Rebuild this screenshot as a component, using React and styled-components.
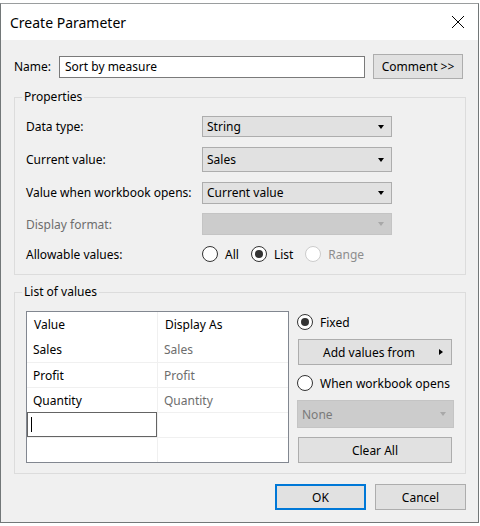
import React from 'react'
import styled, { createGlobalStyle } from 'styled-components'

const GlobalStyle = createGlobalStyle`
  html, body {
    margin: 0;
    padding: 0;
    background: #ffffff;
  }
  body {
    font-family: 'Segoe UI', 'Noto Sans', sans-serif;
    font-size: 12px;
    color: #000;
  }
`

const Window = styled.div`
  margin-top: 3px;
  width: 477px;
  border: 1px solid #727778;
  border-top-color: #9a9d9e;
  background: #f0f0f0;
  box-shadow: 0 2px 0 #8e9292;
`

const TitleBar = styled.div`
  height: 36px;
  background: #ffffff;
  display: flex;
  align-items: center;
  padding-left: 9px;
  padding-right: 13px;
`

const Title = styled.div`
  flex: 1;
  font-size: 14px;
`

const CloseButton = styled.div`
  width: 14px;
  height: 14px;
  display: flex;
`

const Body = styled.div`
  padding: 14px 12px 12px 13px;
`

const NameRow = styled.div`
  display: flex;
  align-items: center;
  height: 25px;
`

const NameLabel = styled.span`
  width: 45px;
`

const TextInput = styled.div`
  width: 299px;
  height: 20px;
  border: 1px solid #7a7a7a;
  background: #ffffff;
  display: flex;
  align-items: center;
  padding-left: 5px;
  margin-right: 8px;
`

const Button = styled.div`
  box-sizing: border-box;
  width: ${p => p.$w}px;
  height: ${p => p.$h || 26}px;
  background: #e1e1e1;
  border: ${p => (p.$primary ? '2px solid #0078d7' : '1px solid #adadad')};
  display: flex;
  align-items: center;
  justify-content: center;
`

const Group = styled.fieldset`
  margin: ${p => p.$top}px 0 0 0;
  padding: ${p => p.$pad};
  border: 1px solid #dcdcdc;
  min-width: 0;
`

const Legend = styled.legend`
  padding: 0 2px;
  margin-left: -4px;
  line-height: 16px;
`

const PropRow = styled.div`
  display: flex;
  align-items: center;
  height: ${p => p.$h}px;
`

const PropLabel = styled.span`
  width: 176px;
  color: ${p => (p.$disabled ? '#6d6d6d' : '#000')};
`

const SelectBox = styled.div`
  box-sizing: border-box;
  width: ${p => p.$w}px;
  height: ${p => p.$h}px;
  background: ${p => (p.$disabled ? '#cccccc' : '#e1e1e1')};
  border: 1px solid ${p => (p.$disabled ? '#c4c4c4' : '#adadad')};
  color: ${p => (p.$disabled ? '#7a7a7a' : '#000')};
  display: flex;
  align-items: center;
  padding: 0 7px 0 4px;

  span {
    flex: 1;
  }
`

const Caret = styled.i`
  width: 0;
  height: 0;
  border-left: 3.5px solid transparent;
  border-right: 3.5px solid transparent;
  border-top: 4px solid ${p => (p.$disabled ? '#a8a8a8' : '#000')};
`

const RadioGroup = styled.div`
  display: flex;
  align-items: center;
`

const RadioItem = styled.label`
  display: flex;
  align-items: center;
  margin-right: ${p => p.$gap || 0}px;
  color: ${p => (p.$disabled ? '#8d8d8d' : '#000')};
  height: ${p => p.$h || 16}px;
`

const Circle = styled.span`
  box-sizing: border-box;
  width: 16px;
  height: 16px;
  border-radius: 50%;
  border: 1px solid ${p => (p.$disabled ? '#cccccc' : '#333333')};
  background: #ffffff;
  display: flex;
  align-items: center;
  justify-content: center;
  margin-right: 7px;

  &::after {
    content: '';
    display: ${p => (p.$checked ? 'block' : 'none')};
    width: 8px;
    height: 8px;
    border-radius: 50%;
    background: #333333;
  }
`

const ListArea = styled.div`
  display: flex;
`

const Table = styled.div`
  box-sizing: border-box;
  width: 263px;
  height: 152px;
  border: 1px solid #828790;
  background: #ffffff;
  display: grid;
  grid-template-columns: 130px 1fr;
  grid-auto-rows: 25px;
  align-content: start;
`

const Cell = styled.div`
  display: flex;
  align-items: center;
  padding-left: ${p => (p.$head ? 7 : 6)}px;
  border-top: ${p => (p.$line ? '1px solid #f0f0f0' : 'none')};
  border-left: ${p => (p.$second ? '1px solid #f0f0f0' : 'none')};
  color: ${p => (p.$muted ? '#6d6d6d' : '#000')};
  box-sizing: border-box;
`

const EditCell = styled.div`
  box-sizing: border-box;
  border: 1px solid #646464;
  display: flex;
  align-items: center;
  padding-left: 3px;

  &::before {
    content: '';
    width: 1px;
    height: 15px;
    background: #000;
  }
`

const SideColumn = styled.div`
  margin-left: 8px;
  display: flex;
  flex-direction: column;
  width: 157px;
`

const SideRow = styled.div`
  margin-top: ${p => p.$top || 0}px;
  padding-left: ${p => p.$indent || 0}px;
`

const ButtonLabel = styled.span`
  flex: 1;
  text-align: center;
`

const Arrow = styled.i`
  width: 0;
  height: 0;
  border-top: 3.5px solid transparent;
  border-bottom: 3.5px solid transparent;
  border-left: 4px solid #000;
  margin-right: 8px;
`

const Footer = styled.div`
  display: flex;
  justify-content: flex-end;
  gap: 9px;
  margin-top: 10px;
`

const Select = ({ value, w = 190, h = 22, disabled }) => (
  <SelectBox $w={w} $h={h} $disabled={disabled}>
    <span>{value}</span>
    <Caret $disabled={disabled} />
  </SelectBox>
)

const Radio = ({ label, checked, disabled, gap }) => (
  <RadioItem $gap={gap} $disabled={disabled}>
    <Circle $checked={checked} $disabled={disabled} />
    {label}
  </RadioItem>
)

const rows = [
  ['Sales', 'Sales'],
  ['Profit', 'Profit'],
  ['Quantity', 'Quantity'],
]

const App = () => {
  return (
    <>
      <GlobalStyle />
      <Window>
        <TitleBar>
          <Title>Create Parameter</Title>
          <CloseButton>
            <svg width="14" height="14" viewBox="0 0 14 14">
              <path d="M1 1 L13 13 M13 1 L1 13" stroke="#000" strokeWidth="1" fill="none" />
            </svg>
          </CloseButton>
        </TitleBar>
        <Body>
          <NameRow>
            <NameLabel>Name:</NameLabel>
            <TextInput>Sort by measure</TextInput>
            <Button $w={90} $h={25}>Comment &gt;&gt;</Button>
          </NameRow>

          <Group $top={10} $pad="5px 11px 5px 11px">
            <Legend>Properties</Legend>
            <PropRow $h={33}>
              <PropLabel>Data type:</PropLabel>
              <Select value="String" h={21} />
            </PropRow>
            <PropRow $h={33}>
              <PropLabel>Current value:</PropLabel>
              <Select value="Sales" h={25} />
            </PropRow>
            <PropRow $h={33}>
              <PropLabel>Value when workbook opens:</PropLabel>
              <Select value="Current value" h={22} />
            </PropRow>
            <PropRow $h={30}>
              <PropLabel $disabled>Display format:</PropLabel>
              <Select value="" h={22} disabled />
            </PropRow>
            <PropRow $h={30}>
              <PropLabel>Allowable values:</PropLabel>
              <RadioGroup>
                <Radio label="All" gap={12} />
                <Radio label="List" checked gap={12} />
                <Radio label="Range" disabled />
              </RadioGroup>
            </PropRow>
          </Group>

          <Group $top={9} $pad="11px 11px 10px 11px">
            <Legend>List of values</Legend>
            <ListArea>
              <Table>
                <Cell $head>Value</Cell>
                <Cell $head $second>Display As</Cell>
                {rows.map(([value, display]) => (
                  <React.Fragment key={value}>
                    <Cell $line={value !== 'Sales'}>{value}</Cell>
                    <Cell $second $muted $line={value !== 'Sales'}>{display}</Cell>
                  </React.Fragment>
                ))}
                <EditCell />
                <Cell $second $line />
                <Cell $line />
                <Cell $second $line />
              </Table>
              <SideColumn>
                <SideRow>
                  <RadioItem $h={22}>
                    <Circle $checked />
                    Fixed
                  </RadioItem>
                </SideRow>
                <SideRow $top={6} $indent={1}>
                  <Button $w={154}>
                    <ButtonLabel>Add values from</ButtonLabel>
                    <Arrow />
                  </Button>
                </SideRow>
                <SideRow $top={7}>
                  <RadioItem $h={22}>
                    <Circle />
                    When workbook opens
                  </RadioItem>
                </SideRow>
                <SideRow $top={6}>
                  <Select value="None" w={157} h={28} disabled />
                </SideRow>
                <SideRow $top={9} $indent={1}>
                  <Button $w={154}>Clear All</Button>
                </SideRow>
              </SideColumn>
            </ListArea>
          </Group>

          <Footer>
            <Button $w={91} $primary>OK</Button>
            <Button $w={91}>Cancel</Button>
          </Footer>
        </Body>
      </Window>
    </>
  )
}

export default App
